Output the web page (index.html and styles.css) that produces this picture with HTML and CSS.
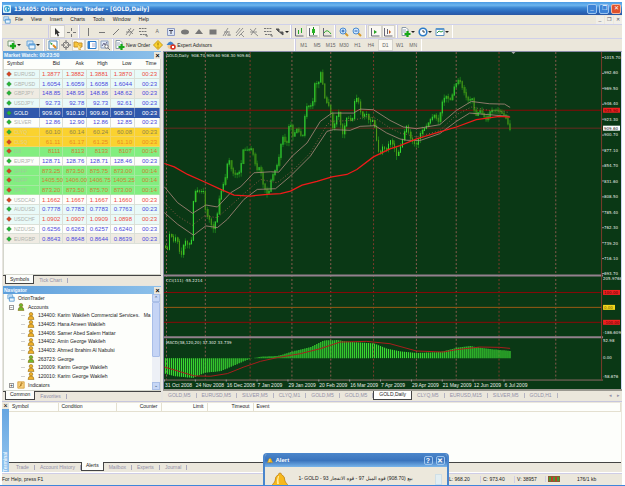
FILE: index.html
```html
<!DOCTYPE html>
<html lang="en">
<head>
<meta charset="utf-8">
<title>134405: Orion Brokers Trader - [GOLD,Daily]</title>
<link rel="stylesheet" href="styles.css">
</head>
<body>
<svg class="defs" aria-hidden="true">
  <symbol id="globe" viewBox="0 0 10 10"><rect width="10" height="10" rx="1" fill="#d8f2fb"/><circle cx="5" cy="5" r="3.6" fill="#2a9fd0"/><path d="M3 3h2l-1 2 1 3H4L2.500 5zM6 3l2 1-1 2z" fill="#fff"/></symbol>
  <symbol id="wins" viewBox="0 0 10 10"><path d="M1 1h6v5H1z" fill="#cfe6fa" stroke="#6fa7d8"/><path d="M3 4h6v5H3z" fill="#eaf6ff" stroke="#4f93cc"/><path d="M3 4h6v1.500H3z" fill="#5fa3dc"/></symbol>
  <symbol id="chartadd" viewBox="0 0 10 10"><path d="M1 1h6v5H1z" fill="#f4faf4" stroke="#7a9a7a"/><path d="M6 3v6M3 6h6" stroke="#17a817" stroke-width="2.400"/></symbol>
  <symbol id="pageadd" viewBox="0 0 10 10"><path d="M1 .5h4l2 2v6H1z" fill="#fff" stroke="#8a9aa8"/><path d="M2 3h3M2 5h3" stroke="#9ab"/><path d="M6.500 4v6M3.500 7h6" stroke="#17a817" stroke-width="2.200"/></symbol>
  <symbol id="market" viewBox="0 0 10 10"><path d="M1 1h8v8H1z" fill="#fff" stroke="#4a86b8"/><path d="M2 2l3 2-2 1z" fill="#2a9a3a"/><path d="M5 5l3 3" stroke="#e08a1a" stroke-width="2"/></symbol>
  <symbol id="target" viewBox="0 0 10 10"><circle cx="5" cy="5" r="3" fill="none" stroke="#777"/><path d="M5 0v4M5 6v4M0 5h4M6 5h4" stroke="#777"/></symbol>
  <symbol id="folder" viewBox="0 0 10 10"><path d="M1 2h3l1 1h4v4H1z" fill="#f6c53a" stroke="#c8912a"/><path d="M5 4l1.500 2 2.500.3-2 1.500.5 2.200-2.500-1.200" fill="#ffe27a" stroke="#c8912a" stroke-width=".6"/></symbol>
  <symbol id="indi" viewBox="0 0 10 10"><path d="M1 1h8v8H1z" fill="#f8cf7a" stroke="#d39a3a"/><path d="M3 7q2 0 2-3t2-1M4 5h2" fill="none" stroke="#a06a10"/></symbol>
  <symbol id="term" viewBox="0 0 10 10"><path d="M1 1.500h8v7H1z" fill="#fff" stroke="#2f7fcf"/><path d="M1 1.500h2v7H1z" fill="#2f7fcf"/><path d="M5 4h3M5 6h3" stroke="#aac"/></symbol>
  <symbol id="tester" viewBox="0 0 10 10"><path d="M1 1h7v7H1z" fill="#e4ecf8" stroke="#8ba0c0"/><path d="M2 6l2-3 1 2 2-3" fill="none" stroke="#668"/><circle cx="6.500" cy="6.500" r="1.700" fill="#fff" stroke="#777"/><path d="M8 8l2 2" stroke="#777"/></symbol>
  <symbol id="diamond" viewBox="0 0 10 10"><path d="M5 .5L9.500 5 5 9.500.5 5z" fill="#fbd22e" stroke="#c89a18"/><path d="M5 2.500v3M5 6.500v1.200" stroke="#9a7000"/></symbol>
  <symbol id="expert" viewBox="0 0 10 10"><circle cx="4.500" cy="6" r="3" fill="#f2c890"/><path d="M.5 5q4-7 8 0z" fill="#3f82cc"/><circle cx="7" cy="7" r="2.800" fill="#d8392a"/><path d="M6 6h2v2H6z" fill="#fff"/></symbol>
  <symbol id="cursor" viewBox="0 0 10 10"><path d="M3 1l5 5H6l1 3-1.300.5-1.200-3L3 8z" fill="#333"/></symbol>
  <symbol id="cross" viewBox="0 0 10 10"><path d="M5.500 1v3M5.500 7v3M1 5.500h3M7 5.500h3" stroke="#777"/></symbol>
  <symbol id="vline" viewBox="0 0 10 10"><path d="M5.500 1v8" stroke="#777"/></symbol>
  <symbol id="hline" viewBox="0 0 10 10"><path d="M2 5.500h6" stroke="#777"/></symbol>
  <symbol id="trend" viewBox="0 0 10 10"><path d="M2 8l6-6" stroke="#777"/></symbol>
  <symbol id="channel" viewBox="0 0 10 10"><path d="M1 8l5-7M4 9l5-7M3 2l5 5M1 5h6" stroke="#777" stroke-width=".8"/></symbol>
  <symbol id="fibo" viewBox="0 0 10 10"><path d="M1 1.500h8M1 4.500h8M2 7.500h7" stroke="#777" stroke-dasharray="2 .7"/><path d="M7 8h2v2" stroke="#777" fill="none"/></symbol>
  <symbol id="label" viewBox="0 0 10 10"><path d="M1.500 1.500h7v7h-7z" fill="#dbe5f5" stroke="#8d9ac2"/><path d="M3 3.500h4M5 3v4" stroke="#445"/></symbol>
  <symbol id="ell" viewBox="0 0 10 10"><ellipse cx="5" cy="5" rx="4" ry="2.500" fill="#777"/></symbol>
  <symbol id="tri" viewBox="0 0 10 10"><path d="M5 2l4 5H1z" fill="#777"/></symbol>
  <symbol id="rec" viewBox="0 0 10 10"><path d="M1.500 2.500h7v5h-7z" fill="#777"/></symbol>
  <symbol id="fork" viewBox="0 0 10 10"><path d="M1 9l5-8M3 9l3-5M2 5h6M5 8h4M7 6v3" stroke="#888" stroke-width=".9"/></symbol>
  <symbol id="fan" viewBox="0 0 10 10"><path d="M1 9l7-8M1 6l4-5M4 9l5-5M6 7l3 3" stroke="#888" stroke-width=".9"/></symbol>
  <symbol id="gann" viewBox="0 0 10 10"><path d="M1 2l8 7M2 8l5-7M1 5h7" stroke="#888" stroke-width=".9"/></symbol>
  <symbol id="arrows" viewBox="0 0 10 10"><path d="M1 2h3v3zM5 5h3v3z" fill="#555" stroke="#555"/><path d="M2 3l6 5" stroke="#555"/></symbol>
  <symbol id="bars" viewBox="0 0 10 10"><path d="M1.500 1v8h8" fill="none" stroke="#667"/><path d="M4.500 3v4M7.500 1v5" stroke="#2ba82b"/></symbol>
  <symbol id="candle" viewBox="0 0 10 10"><path d="M1.500 1v8h8" fill="none" stroke="#667"/><path d="M5.500 0v8" stroke="#188a18"/><path d="M4 2h3v4H4z" fill="#25b325"/></symbol>
  <symbol id="linec" viewBox="0 0 10 10"><path d="M1.500 1v8h8" fill="none" stroke="#667"/><path d="M2 6q3-5 7 1" fill="none" stroke="#2ba82b"/></symbol>
  <symbol id="zin" viewBox="0 0 10 10"><path d="M6 6l3 3" stroke="#d99a2b" stroke-width="2"/><circle cx="4" cy="4" r="3" fill="#cfe7ff" stroke="#4a8ad0"/><path d="M2.500 4h3M4 2.500v3" stroke="#2360b0"/></symbol>
  <symbol id="zout" viewBox="0 0 10 10"><path d="M6 6l3 3" stroke="#d99a2b" stroke-width="2"/><circle cx="4" cy="4" r="3" fill="#cfe7ff" stroke="#4a8ad0"/><path d="M2.500 4h3" stroke="#2360b0"/></symbol>
  <symbol id="scroll" viewBox="0 0 10 10"><path d="M1.500 1v8h8" fill="none" stroke="#667"/><path d="M4 3l3 2-3 2z" fill="#25a325"/></symbol>
  <symbol id="shift" viewBox="0 0 10 10"><path d="M1.500 1v8h8M4.500 2v5" fill="none" stroke="#667"/><path d="M6 3l2 2-2 2z" fill="#c85a1a"/></symbol>
  <symbol id="clock" viewBox="0 0 10 10"><circle cx="5" cy="5" r="3.800" fill="#fff" stroke="#2b7bc8" stroke-width="1.600"/><path d="M5 3v2h2" fill="none" stroke="#345"/></symbol>
  <symbol id="tmpl" viewBox="0 0 10 10"><path d="M1 1.500h8v7H1z" fill="#fff" stroke="#5c8fbf"/><path d="M1 1.500h8v1.500H1z" fill="#5c9ad2"/><path d="M2 6l2-2 2 1 2-1" fill="none" stroke="#2a9a4a"/></symbol>
  <symbol id="dot" viewBox="0 0 6 6"><path d="M3 .5L5.500 3 3 5.500.5 3z" fill="currentColor" stroke="#444" stroke-opacity=".5" stroke-width=".5"/></symbol>
  <symbol id="user" viewBox="0 0 8 9"><circle cx="4" cy="2.500" r="2" fill="currentColor" stroke="#8a6410" stroke-width=".6"/><path d="M.7 8.500q0-4 3.300-4t3.300 4z" fill="currentColor" stroke="#8a6410" stroke-width=".6"/></symbol>
  <symbol id="bell" viewBox="0 0 16 16"><path d="M8 1q1.500 0 1.500 1.500Q13 4 13 9q1 2 2.500 3.500v1H.5v-1Q2 11 3 9 3 4 6.500 2.500 6.500 1 8 1z" fill="#f6b81c" stroke="#b87a10" stroke-width=".7"/><path d="M6 4Q4.500 7 5 12h2Q6 7 7 4z" fill="#ffeb9a"/><path d="M6 14h4l-2 2z" fill="#8a5a18"/></symbol>
</svg>

<div class="app">
  <header class="titlebar">
    <svg class="ico"><use href="#globe"/></svg>
    <h1>134405: Orion Brokers Trader - [GOLD,Daily]</h1>
    <div class="winbtns"><button aria-label="Minimize">_</button><button aria-label="Restore">❐</button><button class="close" aria-label="Close">✕</button></div>
  </header>

  <nav class="menubar">
    <svg class="ico"><use href="#wins"/></svg>
    <button>File</button><button>View</button><button>Insert</button><button>Charts</button><button>Tools</button><button>Window</button><button>Help</button>
    <span class="mdi"><button aria-label="Minimize chart">_</button><button aria-label="Restore chart">❐</button><button aria-label="Close chart">✕</button></span>
  </nav>

  <div class="toolbar lines">
    <div class="grp pair"><button class="on" aria-label="Cursor"><svg><use href="#cursor"/></svg></button><button aria-label="Crosshair"><svg><use href="#cross"/></svg></button></div>
    <div class="grp draw">
      <button aria-label="Vertical line"><svg><use href="#vline"/></svg></button>
      <button aria-label="Horizontal line"><svg><use href="#hline"/></svg></button>
      <button aria-label="Trendline"><svg><use href="#trend"/></svg></button>
      <button aria-label="Channel"><svg><use href="#channel"/></svg></button>
      <button aria-label="Fibonacci"><svg><use href="#fibo"/></svg></button>
      <button>A</button>
      <button aria-label="Label"><svg><use href="#label"/></svg></button>
      <button aria-label="Ellipse"><svg><use href="#ell"/></svg></button>
      <button aria-label="Triangle"><svg><use href="#tri"/></svg></button>
      <button aria-label="Rectangle"><svg><use href="#rec"/></svg></button>
      <button aria-label="Pitchfork"><svg><use href="#fork"/></svg></button>
      <button aria-label="Fan"><svg><use href="#fan"/></svg></button>
      <button aria-label="Gann"><svg><use href="#gann"/></svg></button>
      <button aria-label="Expansion"><svg><use href="#fibo"/></svg></button>
      <button class="drop" aria-label="Arrows"><svg><use href="#arrows"/></svg></button>
    </div>
    <div class="grp kinds"><button aria-label="Bars"><svg><use href="#bars"/></svg></button><button class="on" aria-label="Candles"><svg><use href="#candle"/></svg></button><button aria-label="Line"><svg><use href="#linec"/></svg></button></div>
    <div class="grp pair"><button aria-label="Zoom in"><svg><use href="#zin"/></svg></button><button aria-label="Zoom out"><svg><use href="#zout"/></svg></button></div>
    <div class="grp pair"><button class="on" aria-label="Auto scroll"><svg><use href="#scroll"/></svg></button><button class="on" aria-label="Chart shift"><svg><use href="#shift"/></svg></button></div>
    <div class="grp wide"><button class="drop" aria-label="Indicators"><svg><use href="#pageadd"/></svg></button><button class="drop" aria-label="Periods"><svg><use href="#clock"/></svg></button><button class="drop" aria-label="Templates"><svg><use href="#tmpl"/></svg></button></div>
  </div>

  <div class="toolbar std">
    <div class="grp wide2"><button class="drop" aria-label="New chart"><svg><use href="#chartadd"/></svg></button><button class="drop" aria-label="Profiles"><svg><use href="#wins"/></svg></button></div>
    <div class="grp views"><button class="on" aria-label="Market watch"><svg><use href="#market"/></svg></button><button aria-label="Data window"><svg><use href="#target"/></svg></button><button class="on" aria-label="Navigator"><svg><use href="#folder"/></svg></button><button class="on" aria-label="Terminal"><svg><use href="#term"/></svg></button><button aria-label="Tester"><svg><use href="#tester"/></svg></button></div>
    <div class="grp orders"><button><svg><use href="#pageadd"/></svg>New Order</button><button aria-label="Editor"><svg><use href="#diamond"/></svg></button><button><svg><use href="#expert"/></svg>Expert Advisors</button></div>
    <div class="grp frames"><button>M1</button><button>M5</button><button>M15</button><button>M30</button><button>H1</button><button>H4</button><button class="on">D1</button><button>W1</button><button>MN</button></div>
  </div>

  <main class="work">
    <aside class="side">
      <section class="panel market">
        <h2>Market Watch: 00:23:50<button aria-label="Close Market Watch">×</button></h2>
        <div class="body">
          <table>
            <thead><tr><th>Symbol</th><th>Bid</th><th>Ask</th><th>High</th><th>Low</th><th>Time</th></tr></thead>
            <tbody id="quotes"></tbody>
          </table>
        </div>
        <div class="tabs"><button class="sel">Symbols</button><button>Tick Chart</button></div>
      </section>
      <section class="panel nav">
        <h2>Navigator<button aria-label="Close Navigator">×</button></h2>
        <div class="body tree">
          <ul>
            <li><svg><use href="#wins"/></svg>OrionTrader</li>
            <li class="l1"><i class="box">−</i><svg class="duo"><use href="#user"/></svg>Accounts</li>
            <li class="l2"><svg><use href="#user"/></svg>134400: Karim Wakileh Commercial Services.&nbsp;&nbsp; Ma</li>
            <li class="l2"><svg><use href="#user"/></svg>134405: Hana Ameen Wakileh</li>
            <li class="l2"><svg><use href="#user"/></svg>134406: Samer Abed Salem Hattar</li>
            <li class="l2"><svg><use href="#user"/></svg>134402: Amin George Wakileh</li>
            <li class="l2"><svg><use href="#user"/></svg>134403: Ahmed Ibrahim Al Nabulsi</li>
            <li class="l2"><svg class="live"><use href="#user"/></svg>263723: George</li>
            <li class="l2"><svg><use href="#user"/></svg>120009: Karim George Wakileh</li>
            <li class="l2"><svg><use href="#user"/></svg>120010: Karim George Wakileh</li>
            <li class="l1"><i class="box">+</i><svg><use href="#indi"/></svg>Indicators</li>
          </ul>
          <div class="scroll"><span>⌃</span><b></b><span>⌄</span></div>
        </div>
        <div class="tabs"><button class="sel">Common</button><button>Favorites</button></div>
      </section>
    </aside>

    <section class="chartarea">
      <div class="chart"><svg id="chart" viewBox="0 0 459 338" preserveAspectRatio="xMinYMin meet" role="img" aria-label="GOLD daily chart"></svg></div>
      <div class="charttabs">
        <button>GOLD,M5</button><button>EURUSD,M5</button><button>SILVER,M5</button><button>CLYQ,M1</button><button>GOLD,M5</button><button>GOLD,M5</button><button class="sel">GOLD,Daily</button><button>CLYQ,M5</button><button>EURUSD,M15</button><button>SILVER,M5</button><button>GOLD,H1</button>
        <span>◂</span><span>▸</span>
      </div>
    </section>
  </main>

  <section class="terminal">
    <div class="grip"><button aria-label="Close Terminal">×</button><h2>Terminal</h2></div>
    <div class="termmain">
      <table><thead><tr><th>Symbol</th><th>Condition</th><th>Counter</th><th>Limit</th><th>Timeout</th><th>Event</th></tr></thead></table>
      <div class="empty"></div>
      <div class="tabs"><button>Trade</button><button>Account History</button><button class="sel">Alerts</button><button>Mailbox</button><button>Experts</button><button>Journal</button></div>
    </div>
  </section>

  <footer class="status">
    <span class="help">For Help, press F1</span><span>L: 968.20</span><span>C: 973.40</span><span>V: 38957</span><span><i class="meter"></i></span><span>176/1 kb</span>
  </footer>

  <div class="alert" role="dialog" aria-label="Alert">
    <header><svg><use href="#bell"/></svg><h2>Alert</h2><button aria-label="Help">?</button><button aria-label="Close alert">✕</button></header>
    <div class="msg"><svg><use href="#bell"/></svg><p dir="ltr">1- GOLD - 93 <bdi>قوه الانفجار</bdi> - 97 <bdi>قوه الميل</bdi> (908.70) <bdi>بيع</bdi></p><i></i></div>
  </div>
</div>
<script src="chart.js"></script>
</body>
</html>
```

FILE: styles.css
```css
* { box-sizing: border-box; margin: 0; padding: 0; }
body { background: #fff; font: 5px/7px "Liberation Sans", sans-serif; color: #222; }
button { font: inherit; color: inherit; background: none; border: 0; display: flex; align-items: center; justify-content: center; white-space: nowrap; }
svg { display: block; flex: none; }
ul { list-style: none; }
i { font-style: normal; }
.defs { position: absolute; width: 0; height: 0; }
.app { min-height: 100vh; display: flex; flex-direction: column; padding: 2px 3px 0 2px; position: relative; overflow: hidden; border-bottom: 2px solid #3f86da; background: #fff; }
.ico { width: 8px; height: 8px; }

.titlebar { height: 13px; display: flex; align-items: center; gap: 3px; padding: 0 1px; background: linear-gradient(#4a9be4 0, #6cb4ee 25%, #3c86d2 45%, #2a68bb 75%, #2a57a4); color: #f4f9ff; }
.titlebar h1 { flex: 1; font-family: "DejaVu Sans Condensed", "DejaVu Sans", sans-serif; font-size: 6px; line-height: 12px; font-weight: bold; }
.winbtns { display: flex; gap: 2px; }
.winbtns button { width: 10px; height: 10px; border: 1px solid #9cc6f0; border-radius: 2px; background: #3d83d6; font-size: 6px; }
.winbtns .close { background: #e0522c; border-color: #f3b9a2; }

.menubar { height: 9px; display: flex; align-items: center; gap: 8px; padding-left: 1px; background: #ece8dc; }
.menubar .ico { margin-right: -4px; }
.mdi { margin-left: auto; display: flex; gap: 1px; }
.mdi button { width: 8px; height: 8px; background: #f1efe8; color: #556; }

.toolbar { height: 14px; display: flex; align-items: stretch; background: #ebe7db; border-top: 1px solid #cfd0ea; }
.std { height: 13px; }
.toolbar svg { width: 10px; height: 10px; }
.grp { display: flex; border-left: 1px solid #cccbe4; border-right: 1px solid #fff; padding: 0 1px; }
.grp button { flex: 1; color: #666; position: relative; }
.grp button.on { background: #faf8f2; border: 1px solid #d5d3cc; }
.drop::after { content: ""; border: 2px solid transparent; border-top-color: #222; border-bottom: 0; }
.lines { padding-left: 46px; }
.pair { width: 31px; }
.draw { width: 212px; }
.kinds { width: 44px; }
.wide { width: 56px; }
.wide2 { width: 42px; }
.views { width: 69px; }
.orders { width: 182px; gap: 3px; }
.orders button { flex: none; color: #222; gap: 1px; }
.frames { width: 127px; }

.work { flex: 1; display: flex; gap: 2px; background: #e7e5df; min-height: 0; }
.side { width: 159px; flex: none; display: flex; flex-direction: column; gap: 1px; padding-left: 1px; }
.panel { display: flex; flex-direction: column; min-height: 0; }
.panel h2 { height: 8px; flex: none; display: flex; align-items: center; justify-content: space-between; background: linear-gradient(90deg, #5e9fdb, #8cc0ea); color: #f4faff; font-size: 5px; font-weight: bold; padding-left: 1px; }
.panel h2 button { width: 7px; height: 7px; background: #e9e6dc; color: #000; font-size: 7px; }
.panel .body { background: #fdfefb; border: 1px solid #d4d6cc; border-top: 0; flex: 1; }
.nav { flex: 1; }

.market .body { padding-bottom: 30px; }
.market table { width: 100%; height: 185px; border-collapse: collapse; table-layout: fixed; }
.market th { height: 10px; font-weight: normal; text-align: right; padding: 0 3px; border-bottom: 1px solid #dcdcd4; }
.market th:first-child { width: 35px; text-align: left; }
.market th:nth-child(6) { width: 25px; }
.market td { padding: 0 2px; font-size: 6px; line-height: 8px; text-align: right; border: 1px solid #dbe0d8; color: #4a48dc; }
.market td:first-child { text-align: left; color: #b0b3ae; font-size: 5px; border-left: 0; }
.market td svg { display: inline-block; width: 6px; height: 6px; margin-right: 2px; vertical-align: -1px; color: #22b632; }
.market .down td { color: #ee4a42; }
.market .down td:first-child { color: #b0b3ae; }
.market .down td svg { color: #d8431f; }
.market .c2 { background: #e9faf8; }
.market .c3 { background: #efebe2; }
.market .gold td { background: #2f58ac; border-color: #2f58ac #7590c8; color: #fff; }
.market .yel { background: #fad22f; }
.market .yel td { color: #90844e; border-color: #f2d666; }
.market .yel.down td { color: #ec8a22; }
.market .yel td:first-child { color: #ddd193; }
.market .grn { background: #82ee80; }
.market .grn td { color: #cc8434; border-color: #a5eaa0; }
.market .grn td:first-child { color: #9fcb9c; }

.tabs { display: flex; flex: none; height: 10px; background: #ebe7dc; border-top: 1px solid #444; color: #9290a8; padding-left: 2px; }
.tabs button { padding: 0 5px; position: relative; }
.tabs button:not(.sel) { border-right: 1px solid #aaa9bc; height: 5px; margin-top: 2px; }
.tabs .sel { background: #fdfefb; color: #222; border: 1px solid #444; border-top: 0; margin-top: -1px; height: 9px; padding: 0 4px; }

.tree { display: flex; overflow: hidden; }
.tree ul { flex: 1; min-width: 0; display: grid; grid-auto-rows: 1fr; }
.tree li { display: flex; align-items: center; gap: 3px; white-space: nowrap; overflow: hidden; padding-left: 3px; min-height: 0; }
.tree svg { width: 8px; height: 8px; color: #efb02a; }
.tree svg.live, .tree svg.duo { color: #6fb72c; }
.tree .l1 { padding-left: 5px; }
.tree .l2 { padding-left: 23px; background: linear-gradient(#cfcfcf, #cfcfcf) 17px 4px / 4px 1px no-repeat; }
.box { width: 5px; height: 5px; border: 1px solid #999; line-height: 3px; text-align: center; }
.scroll { width: 8px; background: #edf0f6; display: flex; flex-direction: column; color: #345; }
.scroll span { height: 8px; background: #c7d7f6; border: 1px solid #aabfe6; text-align: center; line-height: 7px; }
.scroll b { height: 55px; background: #c5d4f5; border: 1px solid #a9bee8; border-radius: 1px; }
.scroll span:last-child { margin-top: auto; line-height: 4px; }

.chartarea { flex: 1; min-width: 0; display: flex; flex-direction: column; }
.chart { flex: 1; background: #0a3815; border: 1px solid #878aa5; border-right-color: #d0d4ee; border-bottom: 0; overflow: hidden; }
.chart svg { width: 100%; }
.chart text { font-family: "DejaVu Sans", sans-serif; }
.chart .date { font-family: "Liberation Sans", sans-serif; }
.charttabs { display: flex; align-items: center; height: 12px; background: #ebe7dc; border-top: 2px solid #9a9890; color: #9290a8; }
.charttabs button { padding: 0 5px; border-right: 1px solid #b5b4c2; height: 5px; }
.charttabs .sel { height: 9px; margin-top: -1px; background: #fff; color: #222; border: 1px solid #444; border-top: 0; }
.charttabs span { width: 8px; text-align: center; font-size: 5px; }
.charttabs span:first-of-type { margin-left: auto; }

.terminal { display: flex; height: 71px; border-top: 1px solid #c6c6dd; background: #ebe7dc; }
.grip { width: 7px; display: flex; flex-direction: column; background: linear-gradient(#62a3e0, #93c4ee); }
.grip button { height: 7px; background: #ebe7dc; color: #000; font-size: 7px; }
.grip h2 { writing-mode: vertical-rl; transform: rotate(180deg); font-size: 5px; line-height: 7px; color: #e8f3fd; flex: 1; }
.termmain { flex: 1; display: flex; flex-direction: column; background: #fdfefb; margin: 1px 1px 0 0; }
.termmain table { width: 100%; table-layout: fixed; border-collapse: collapse; }
.termmain th { height: 9px; font-weight: normal; text-align: left; padding: 0 3px; border-bottom: 1px solid #e4e0d0; border-right: 1px solid #e4e0d0; }
.termmain th:nth-child(1) { width: 49px; }
.termmain th:nth-child(2) { width: 58px; }
.termmain th:nth-child(3) { width: 45px; text-align: right; }
.termmain th:nth-child(4) { width: 46px; text-align: right; }
.termmain th:nth-child(5) { width: 46px; text-align: right; }
.empty { flex: 1; }

.status { display: flex; height: 12px; align-items: center; margin-top: 1px; background: #ebe7dc; border-top: 1px solid #cfcde6; }
.status span { padding-left: 2px; width: 34px; border-left: 1px solid #d0cee4; white-space: nowrap; }
.status .help { flex: 1; border: 0; padding-left: 0; }
.status span:nth-child(4) { width: 31px; }
.status span:nth-child(5) { width: 26px; }
.status span:nth-child(6) { width: 51px; border: 0; padding-left: 6px; }
.meter { display: block; width: 12px; height: 6px; background: repeating-linear-gradient(90deg, #4a9a34 0 2px, #c03a2a 2px 4px); border: 1px solid #8a5a30; }

.alert { position: absolute; left: 42%; bottom: 0; width: 186px; height: 32px; border: 1px solid #4a86cc; border-width: 1px 2px 0; border-radius: 4px 4px 0 0; background: #ece8dc; overflow: hidden; }
.alert header { height: 13px; display: flex; align-items: center; gap: 3px; padding: 0 2px; background: linear-gradient(#4a84c8, #3a74bd 50%, #78b4ea); color: #fff; }
.alert header svg { width: 6px; height: 7px; }
.alert h2 { flex: 1; font-size: 6px; }
.alert header button { width: 9px; height: 9px; border: 1px solid #9cc4ee; border-radius: 2px; font-size: 7px; font-weight: bold; }
.msg { display: flex; align-items: flex-start; padding: 5px 5px 0 7px; gap: 11px; }
.msg svg { width: 16px; height: 16px; }
.msg p { flex: 1; line-height: 12px; white-space: nowrap; font-family: "Liberation Sans", "DejaVu Sans", sans-serif; }
.msg i { width: 7px; height: 11px; background: #e2eef2; border: 1px solid #cfdfe6; margin-top: 2px; }
```

FILE: chart.js
```js
// Quotes: symbol, bid, ask, high, low, time, row classes
const quotes = [
  ["EURUSD", "1.3877", "1.3882", "1.3881", "1.3870", "00:23", "down c2"],
  ["GBPUSD", "1.6054", "1.6059", "1.6058", "1.6044", "00:23", "c2"],
  ["GBPJPY", "148.85", "148.95", "148.86", "148.62", "00:23", "c3"],
  ["USDJPY", "92.73", "92.78", "92.73", "92.61", "00:23", "c2"],
  ["GOLD", "909.60", "910.10", "909.60", "908.30", "00:23", "gold"],
  ["SILVER", "12.86", "12.90", "12.86", "12.85", "00:23", ""],
  ["CLYQ", "60.10", "60.14", "60.24", "60.08", "00:23", "yel"],
  ["CLSQ", "61.11", "61.17", "61.25", "61.10", "00:23", "yel down"],
  ["DJI", "8111", "8113", "8133", "8107", "00:14", "grn down"],
  ["EURJPY", "128.71", "128.76", "128.71", "128.46", "00:23", ""],
  ["SPFP", "873.25", "873.50", "875.75", "873.00", "00:14", "grn down"],
  ["NDFP", "1405.50", "1406.00", "1406.75", "1405.25", "00:14", "grn down"],
  ["SPTS", "873.20", "873.50", "875.70", "873.00", "00:14", "grn down"],
  ["USDCAD", "1.1662", "1.1667", "1.1667", "1.1660", "00:23", "down"],
  ["AUDUSD", "0.7778", "0.7783", "0.7783", "0.7763", "00:23", "c2"],
  ["USDCHF", "1.0902", "1.0907", "1.0909", "1.0898", "00:23", "down c2"],
  ["NZDUSD", "0.6256", "0.6263", "0.6257", "0.6240", "00:23", ""],
  ["EURGBP", "0.8643", "0.8648", "0.8644", "0.8639", "00:23", "c3"]
];
document.getElementById("quotes").innerHTML = quotes.map(q =>
  `<tr class="${q[6]}"><td><svg><use href="#dot"/></svg>${q[0]}</td>` +
  q.slice(1, 6).map(v => `<td>${v}</td>`).join("") + "</tr>").join("");

// Series are kept on a grid of three units per chart pixel.
const px = x => x / 3 - 3, py = y => y / 3 - 2;
const price = [10,590,22,600,28,545,38,575,48,560,58,610,64,615,72,570,84,588,94,570,98,460,106,420,116,425,130,425,136,490,148,510,158,540,170,500,178,440,190,400,196,380,204,320,214,360,222,375,240,365,248,300,262,300,276,295,282,330,290,360,300,350,308,400,320,430,326,430,334,385,350,350,360,310,366,255,380,285,390,205,398,260,412,235,428,265,438,170,458,165,464,100,476,100,484,62,494,140,500,155,510,170,520,240,536,180,548,255,562,200,578,215,584,155,594,140,606,200,620,190,630,215,642,210,650,265,660,320,668,290,680,300,692,270,704,290,712,320,725,285,740,225,755,270,770,285,785,245,800,230,815,205,825,195,838,215,850,150,860,138,875,150,885,110,900,85,912,120,925,150,940,145,948,200,962,180,982,210,995,180,1018,180,1035,195,1045,210,1050,238,1054,238];
const upper = [10,412,50,460,95,492,135,467,170,473,210,430,240,412,280,370,330,367,355,368,395,320,440,280,480,215,515,190,580,190,600,178,640,180,690,212,730,232,770,237,840,225,890,182,935,155,990,162,1035,163,1052,173];
const middle = [10,460,50,500,95,528,130,500,170,505,220,460,270,415,300,390,350,400,400,360,450,310,500,225,515,215,580,212,620,200,645,205,690,235,720,250,770,262,840,243,890,195,935,172,990,182,1050,188];
const lower = [10,490,50,525,98,558,135,530,170,535,200,510,250,450,290,420,345,418,390,380,450,320,500,245,520,240,570,242,600,230,645,228,680,250,720,268,740,272,780,273,840,252,890,215,930,190,990,195,1050,200];
const slow = [10,342,40,352,80,375,130,397,180,420,220,437,270,440,320,435,360,433,390,425,425,407,470,396,515,382,560,375,590,360,640,322,690,298,720,288,770,268,840,247,890,232,950,210,1020,200,1052,202];
const macd = [10,975,40,983,95,988,130,973,180,967,220,950,250,937,268,930,300,924,350,922,400,907,450,895,490,875,530,874,560,879,640,884,680,900,720,908,770,913,840,910,890,897,930,892,980,900,1054,907];
const signal = [10,955,60,970,100,982,150,983,200,975,250,955,300,938,350,927,420,915,480,900,540,880,620,878,690,885,770,907,850,910,890,903,960,895,1020,896,1052,899];

function at(s, x) {
  for (let i = 2; i < s.length; i += 2)
    if (x <= s[i]) return s[i - 1] + (s[i + 1] - s[i - 1]) * (x - s[i - 2]) / (s[i] - s[i - 2]);
  return s[s.length - 1];
}
let out = "";
const line = (x1, y1, x2, y2, c, w = 1, d = "") =>
  out += `<line x1="${x1}" y1="${y1}" x2="${x2}" y2="${y2}" stroke="${c}" stroke-width="${w}" stroke-dasharray="${d}"/>`;
const curve = (s, c, w, d = "") => {
  let p = "";
  for (let i = 0; i < s.length; i += 2) p += px(s[i]) + "," + py(s[i + 1]) + " ";
  out += `<polyline points="${p}" fill="none" stroke="${c}" stroke-width="${w}" stroke-dasharray="${d}"/>`;
};
const text = (x, y, t, c = "#e4eae4", size = 4, cls = "") => out += `<text class="${cls}" x="${x}" y="${y}" fill="${c}" font-size="${size}">${t}</text>`;

[16,133,268,394,511,640,769,889,1018,1187].forEach((x, i) =>
  line(Math.round(px(x)) + .5, 0, Math.round(px(x)) + .5, 329, i % 3 == 2 ? "#7d3a2c" : "#8a5c50", 1, "2 2"));
line(0, 58.5, 440, 58.5, "#8c0808");
line(0, 76.5, 440, 76.5, "#6b2a20");
[[241, "#8c0808"], [256, "#9a5a14"], [271, "#8c0808"]].forEach(r => line(0, r[0] + .5, 440, r[0] + .5, r[1]));

// Candles
let n = 0;
for (let x = 12; x <= 1052; x += 6, n++) {
  const a = py(at(price, x - 3)), b = py(at(price, x + 3));
  const j = (n * 37 % 11) / 3, k = (n * 53 % 13) / 3;
  const cx = Math.round(px(x)) + .5, top = Math.min(a, b), bot = Math.max(a, b) + 1;
  line(cx, top - j, cx, bot + k, "#1a7a1a");
  out += `<rect x="${cx - .5}" y="${top}" width="1" height="${bot - top}" fill="${b > a ? "#4f9a16" : "#35e035"}"/>`;
  if (n % 3 == 0) out += `<rect x="${cx + .5}" y="${top}" width="1" height="${bot - top}" fill="#2c8212"/>`;
}
curve(upper, "#b08a80", .8);
curve(middle, "#a0604e", .8, "1 2");
curve(lower, "#b08a80", .8);
curve(slow, "#f01a1a", 1.3);

// MACD histogram
for (let x = 12; x <= 1054; x += 6) {
  const y = py(at(macd, x)), z = py(927);
  line(Math.round(px(x)) + .5, y, Math.round(px(x)) + .5, z + .5, "#3ad832", 1.2);
}
curve(signal, "#a81c1c", 1);

[224, 286].forEach(y => line(0, y + .5, 441, y + .5, "#93808d", 2));
line(0, 329.5, 441, 329.5, "#8d6a68");
line(439.5, 0, 439.5, 330, "#7d3a2c");
out += '<path d="M349 0h4l-2 2z" fill="#aaa"/>';
text(2, 5, "GOLD,Daily&#160; 908.70 909.60 908.30 909.60");
text(2, 231, "CCI(111) -55.2214");
text(2, 293, "MACD(38,120,20) 37.302 33.739");
["1015.70","992.60","969.50","946.40","923.30","900.70","877.10","854.70","831.60","808.50","785.40","762.30","739.20","716.10","693.70"].forEach((t, i) => {
  const y = py(21 + i * 46.6);
  line(440, Math.round(y) + .5, 442, Math.round(y) + .5, "#999");
  text(442, y + 2, t);
});
[["205.9768", 229], ["-186.609", 283], ["52.98", 291], ["0.00", 308], ["-58.676", 327]].forEach(r => text(441, r[1], r[0]));
[[58, "935.90", "#f02020", "#500", 17], [76, "909.60", "#fff", "#111", 17], [241, "100.00", "#f02020", "#500", 17], [256, "0.00", "#f2d71c", "#6b5600", 12], [271, "-100.00", "#f02020", "#500", 17]].forEach(r => {
  out += `<rect x="441" y="${r[0] - 2}" width="${r[4]}" height="5" fill="${r[2]}"/>`;
  text(442, r[0] + 2, r[1], r[3]);
});
["31 Oct 2008","24 Nov 2008","16 Dec 2008","7 Jan 2009","29 Jan 2009","20 Feb 2009","16 Mar 2009","7 Apr 2009","29 Apr 2009","21 May 2009","12 Jun 2009","6 Jul 2009"].forEach((t, i) => {
  text(i * 31 + 1, 336, t, "#e4eae4", 5, "date");
  line(i * 31 + .5, 329, i * 31 + .5, 331, "#999");
});
document.getElementById("chart").innerHTML = out;
```
